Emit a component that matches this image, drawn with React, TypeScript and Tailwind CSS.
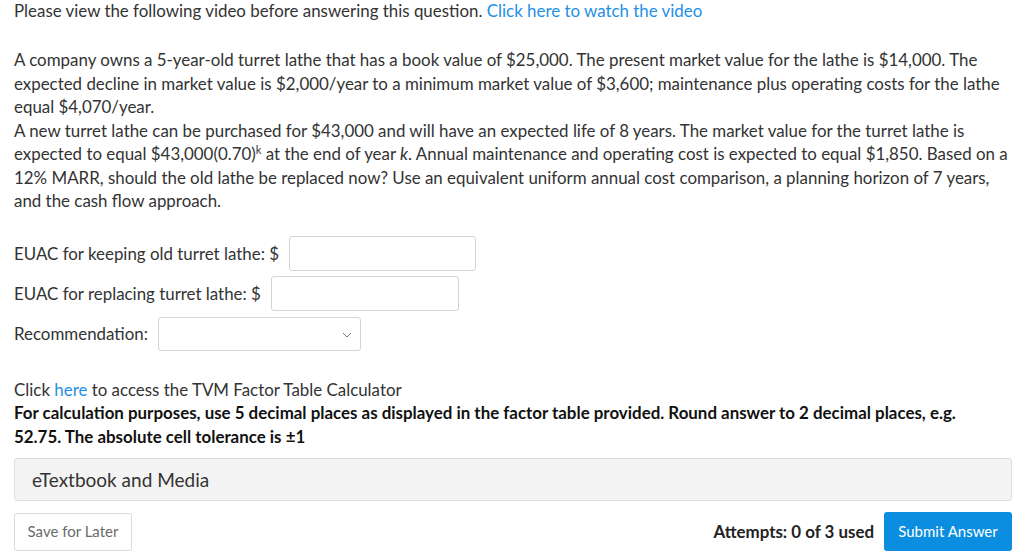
import React from "react";

const Field = ({ label, width }: { label: string; width: string }) => (
  <div className="flex items-center h-[40px] gap-[10px]">
    <span>{label}</span>
    <input
      type="text"
      className={`${width} h-[35px] border border-[#d4d4d4] rounded-[3px] bg-white outline-none`}
    />
  </div>
);

export default function App() {
  return (
    <div className="w-[1024px] h-[560px] bg-white pl-[14px] pr-[12px] font-['Lato',sans-serif] text-[16.9px] leading-[23.5px] text-[#333333] overflow-hidden">
      <p className="-mt-[1px]">
        Please view the following video before answering this question.{" "}
        <a className="text-[#1e90e6]">Click here to watch the video</a>
      </p>

      <div className="mt-[25.5px]">
        <p>
          A company owns a 5-year-old turret lathe that has a book value of $25,000. The present market value for the lathe is $14,000. The
          expected decline in market value is $2,000/year to a minimum market value of $3,600; maintenance plus operating costs for the lathe
          equal $4,070/year.
        </p>
        <p>
          A new turret lathe can be purchased for $43,000 and will have an expected life of 8 years. The market value for the turret lathe is
          expected to equal $43,000(0.70)<span className="relative -top-[6px] text-[11px] leading-none">k</span> at the end of year{" "}
          <i>k</i>. Annual maintenance and operating cost is expected to equal $1,850. Based on a 12% MARR, should the old lathe be replaced
          now? Use an equivalent uniform annual cost comparison, a planning horizon of 7 years, and the cash flow approach.
        </p>
      </div>

      <div className="mt-[21px]">
        <Field label="EUAC for keeping old turret lathe: $" width="w-[187px]" />
        <Field label="EUAC for replacing turret lathe: $" width="w-[188px]" />
        <div className="flex items-center h-[40px] gap-[10px]">
          <span>Recommendation:</span>
          <div className="relative w-[203px] h-[34px] border border-[#d4d4d4] rounded-[3px] bg-white">
            <svg
              className="absolute right-[8px] top-[14px]"
              width="10"
              height="6"
              viewBox="0 0 10 6"
              fill="none"
              stroke="#777"
              strokeWidth="1"
            >
              <path d="M1 1l4 4 4-4" />
            </svg>
          </div>
        </div>
      </div>

      <div className="mt-[24px]">
        <p>
          Click <a className="text-[#1e90e6]">here</a> to access the TVM Factor Table Calculator
        </p>
        <p className="font-bold text-[#111] max-w-[975px]">
          For calculation purposes, use 5 decimal places as displayed in the factor table provided. Round answer to 2 decimal places, e.g.
          52.75. The absolute cell tolerance is ±1
        </p>
      </div>

      <div className="mt-[10px] h-[43px] flex items-center pl-[17px] bg-[#f4f4f4] border border-[#dedede] rounded-[3px] text-[19px]">
        eTextbook and Media
      </div>

      <div className="mt-[11px] flex items-center justify-between">
        <button className="w-[118px] h-[38px] border border-[#dcdcdc] rounded-[3px] bg-white text-[15px] text-[#6b6b6b]">
          Save for Later
        </button>
        <div className="flex items-center gap-[10px]">
          <span className="font-bold text-[#222]">Attempts: 0 of 3 used</span>
          <button className="w-[128px] h-[39px] rounded-[3px] bg-[#0b8ee0] text-white text-[15px]">
            Submit Answer
          </button>
        </div>
      </div>
    </div>
  );
}
